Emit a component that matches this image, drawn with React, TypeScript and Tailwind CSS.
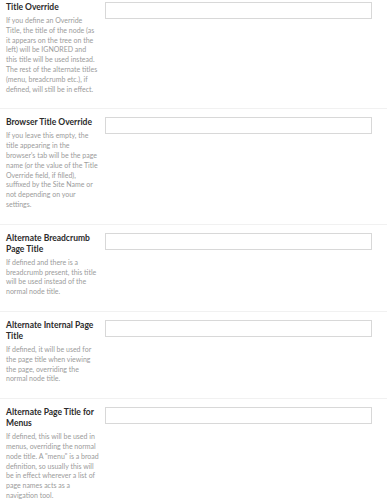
const fields = [
  {
    title: "Title Override",
    help: "If you define an Override Title, the title of the node (as it appears on the tree on the left) will be IGNORED and this title will be used instead. The rest of the alternate titles (menu, breadcrumb etc.), if defined, will still be in effect.",
  },
  {
    title: "Browser Title Override",
    help: "If you leave this empty, the title appearing in the browser's tab will be the page name (or the value of the Title Override field, if filled), suffixed by the Site Name or not depending on your settings.",
  },
  {
    title: "Alternate Breadcrumb Page Title",
    help: "If defined and there is a breadcrumb present, this title will be used instead of the normal node title.",
  },
  {
    title: "Alternate Internal Page Title",
    help: "If defined, it will be used for the page title when viewing the page, overriding the normal node title.",
  },
  {
    title: "Alternate Page Title for Menus",
    help: "If defined, this will be used in menus, overriding the normal node title. A \"menu\" is a broad definition, so usually this will be in effect wherever a list of page names acts as a navigation tool.",
  },
];

export default function App() {
  return (
    <div className="w-[387px] h-[500px] overflow-hidden bg-white font-['Lato',sans-serif]">
      {fields.map((f, i) => (
        <div
          key={f.title}
          className={
            "flex border-b border-[#f1f1f1] pb-[14px] " + (i === 0 ? "pt-[2px]" : "pt-[8px]")
          }
        >
          <div className="w-[105px] shrink-0 pl-[6px] pr-[6px]">
            <h3 className="text-[8.5px] leading-[11px] font-bold text-[#2b2b2b]">{f.title}</h3>
            <p className="mt-[3px] text-[7px] leading-[9.8px] text-[#9b9b9b]">{f.help}</p>
          </div>
          <input
            type="text"
            className="h-[17px] w-[267px] border border-[#d8d8d8] bg-white outline-none"
          />
        </div>
      ))}
    </div>
  );
}
